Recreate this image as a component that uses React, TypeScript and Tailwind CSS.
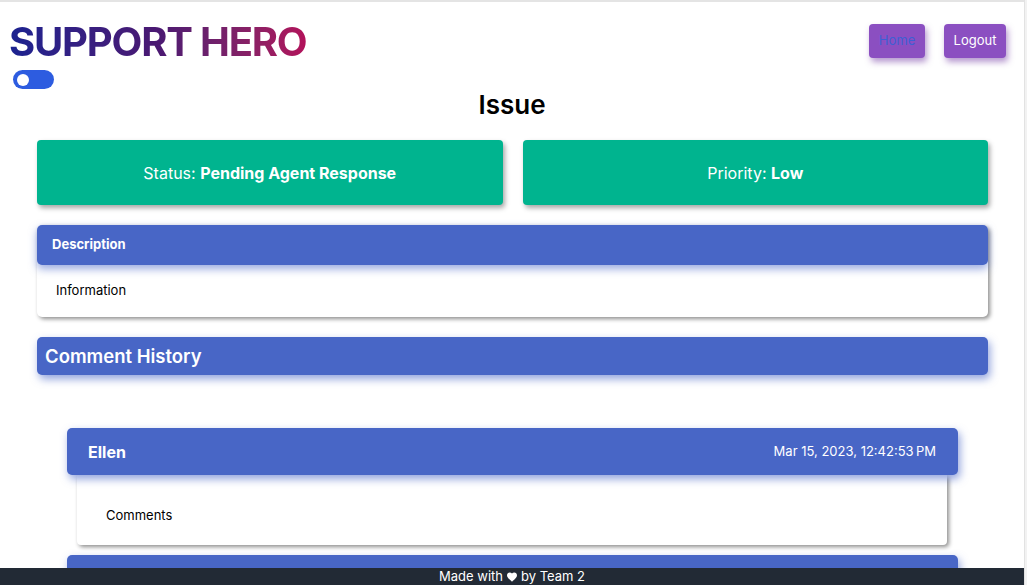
import type { ReactNode } from "react";

const BLUE = "bg-[#4866c6]";

function Heart() {
  return (
    <svg viewBox="0 0 24 24" className="mx-[3px] inline-block h-[12px] w-[12px] fill-white align-[-1px]">
      <path d="M12 21.5 10.6 20.2C5.4 15.5 2 12.4 2 8.6 2 5.5 4.4 3 7.5 3c1.7 0 3.4.8 4.5 2.1C13.1 3.8 14.8 3 16.5 3 19.6 3 22 5.5 22 8.6c0 3.8-3.4 6.9-8.6 11.6L12 21.5z" />
    </svg>
  );
}

function StatCard({ label, value }: { label: string; value: string }) {
  return (
    <div className="flex h-[65px] items-center justify-center rounded-[4px] bg-[#00b48f] text-[16px] text-white shadow-[2px_3px_5px_rgba(0,0,0,0.35)]">
      {label}:&nbsp;<span className="font-bold">{value}</span>
    </div>
  );
}

function CommentHeader({ name, date }: { name?: string; date?: string }) {
  return (
    <div
      className={`relative z-10 flex h-[47px] items-center justify-between rounded-[5px] ${BLUE} pl-[21px] pr-[22px] text-white shadow-[2px_4px_8px_rgba(72,102,198,0.6)]`}
    >
      <span className="text-[16px] font-bold">{name}</span>
      <span className="text-[13px]">{date}</span>
    </div>
  );
}

function Comment({ name, date, children }: { name: string; date: string; children: ReactNode }) {
  return (
    <div className="mx-[30px]">
      <CommentHeader name={name} date={date} />
      <div className="ml-[10px] mr-[11px] h-[70px] rounded-b-[4px] bg-white pl-[29px] pt-[32px] text-[13px] leading-[16px] text-black shadow-[2px_2px_4px_rgba(0,0,0,0.45)]">
        {children}
      </div>
    </div>
  );
}

export default function App() {
  return (
    <div className="flex h-screen overflow-hidden bg-white font-['Inter',sans-serif]">
      <div className="relative flex-1 border-t-2 border-[#e4e4e4]">
        <header className="flex items-start justify-between pl-[9px] pr-[18px]">
          <div className="flex flex-col items-start">
            <h1 className="mt-[13px] bg-gradient-to-r from-[#1a2290] via-[#4a1872] to-[#b2115a] bg-clip-text text-[40px] font-bold leading-[54px] tracking-[-1.2px] text-transparent">
              SUPPORT HERO
            </h1>
            <button className="ml-[4px] mt-[1px] flex h-[19px] w-[41px] items-center rounded-full bg-[#2d5ce0] pl-[4px]">
              <span className="h-[12px] w-[12px] rounded-full bg-white" />
            </button>
          </div>
          <nav className="mt-[22px] flex gap-[19px]">
            <button className="h-[34px] w-[56px] rounded-[4px] bg-[#8b4fc1] text-[13px] text-[#3e5fd4] shadow-[2px_4px_6px_rgba(110,50,160,0.5)]">
              Home
            </button>
            <button className="h-[34px] w-[62px] rounded-[4px] bg-[#8b4fc1] text-[13px] text-white shadow-[2px_4px_6px_rgba(110,50,160,0.5)]">
              Logout
            </button>
          </nav>
        </header>

        <h2 className="text-center text-[26px] font-semibold leading-[32px] text-black">Issue</h2>

        <main className="ml-[37px] mr-[36px] mt-[19px]">
          <div className="grid grid-cols-2 gap-[20px]">
            <StatCard label="Status" value="Pending Agent Response" />
            <StatCard label="Priority" value="Low" />
          </div>

          <section className="mt-[20px] rounded-[5px] bg-white shadow-[2px_2px_4px_rgba(0,0,0,0.45)]">
            <div
              className={`relative z-10 flex h-[40px] items-center rounded-[5px] ${BLUE} pl-[15px] text-[13px] font-bold text-white shadow-[0_4px_8px_rgba(72,102,198,0.55)]`}
            >
              Description
            </div>
            <div className="flex h-[52px] items-center pl-[19px] text-[13px] text-black">Information</div>
          </section>

          <div
            className={`mt-[20px] flex h-[38px] items-center rounded-[5px] ${BLUE} pl-[8px] pt-[2px] text-[18.5px] font-semibold text-white shadow-[2px_4px_8px_rgba(72,102,198,0.6)]`}
          >
            Comment History
          </div>

          <div className="mt-[53px] flex flex-col gap-[10px]">
            <Comment name="Ellen" date={"Mar 15, 2023, 12:42:53\u202fPM"}>
              Comments
            </Comment>
            <div className="mx-[30px]">
              <CommentHeader />
            </div>
          </div>
        </main>

        <footer className="absolute bottom-0 left-0 right-0 z-20 flex h-[17px] items-center justify-center bg-[#222a35] text-[13px] leading-none text-white">
          Made with
          <Heart />
          by Team 2
        </footer>
      </div>
      <div className="w-[3px] border-l border-[#e2e2e2] bg-[#f2f2f2]" />
    </div>
  );
}
